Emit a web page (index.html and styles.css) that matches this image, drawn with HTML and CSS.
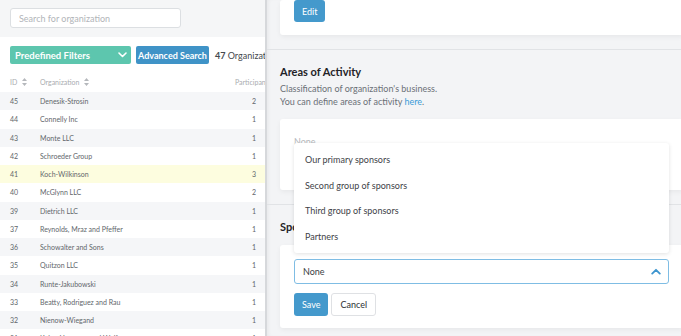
FILE: index.html
```html
<!DOCTYPE html>
<html lang="en">
<head>
  <meta charset="UTF-8" />
  <title>Organizations</title>
  <link rel="stylesheet" href="styles.css">
</head>
<body>
  <div class="layout">
    <aside class="list-panel">
      <div class="search-bar">
        <input type="text" class="search-input" placeholder="Search for organization" />
      </div>
      <div class="filter-bar">
        <button class="btn-filters">Predefined Filters
          <svg width="9" height="6" viewBox="0 0 9 6"><path d="M1 1l3.5 3.5L8 1" fill="none" stroke="#fff" stroke-width="1.6" stroke-linecap="round" stroke-linejoin="round"/></svg>
        </button>
        <button class="btn-advanced">Advanced Search</button>
        <span class="count"><strong>47</strong> Organizations</span>
      </div>
      <table class="org-table">
        <thead>
          <tr>
            <th class="col-id">ID <svg class="sort" width="5" height="8" viewBox="0 0 5 8"><path d="M2.5 0L5 3H0z M2.5 8L0 5h5z" fill="#b5b8bc"/></svg></th>
            <th class="col-org">Organization <svg class="sort" width="5" height="8" viewBox="0 0 5 8"><path d="M2.5 0L5 3H0z M2.5 8L0 5h5z" fill="#b5b8bc"/></svg></th>
            <th class="col-num">Participants</th>
          </tr>
        </thead>
        <tbody>
          <tr><td class="col-id">45</td><td>Denesik-Strosin</td><td class="col-num">2</td></tr>
          <tr><td class="col-id">44</td><td>Connelly Inc</td><td class="col-num">1</td></tr>
          <tr><td class="col-id">43</td><td>Monte LLC</td><td class="col-num">1</td></tr>
          <tr><td class="col-id">42</td><td>Schroeder Group</td><td class="col-num">1</td></tr>
          <tr class="selected"><td class="col-id">41</td><td>Koch-Wilkinson</td><td class="col-num">3</td></tr>
          <tr><td class="col-id">40</td><td>McGlynn LLC</td><td class="col-num">2</td></tr>
          <tr><td class="col-id">39</td><td>Dietrich LLC</td><td class="col-num">1</td></tr>
          <tr><td class="col-id">37</td><td>Reynolds, Mraz and Pfeffer</td><td class="col-num">1</td></tr>
          <tr><td class="col-id">36</td><td>Schowalter and Sons</td><td class="col-num">1</td></tr>
          <tr><td class="col-id">35</td><td>Quitzon LLC</td><td class="col-num">1</td></tr>
          <tr><td class="col-id">34</td><td>Runte-Jakubowski</td><td class="col-num">1</td></tr>
          <tr><td class="col-id">33</td><td>Beatty, Rodriguez and Rau</td><td class="col-num">1</td></tr>
          <tr><td class="col-id">32</td><td>Nienow-Wiegand</td><td class="col-num">1</td></tr>
          <tr><td class="col-id">31</td><td>Kuhn, Hermann and Wolf</td><td class="col-num">1</td></tr>
        </tbody>
      </table>
    </aside>

    <main class="detail-panel">
      <section class="section section-top">
        <div class="card">
          <button class="btn btn-primary">Edit</button>
        </div>
      </section>

      <section class="section">
        <h3>Areas of Activity</h3>
        <p class="hint">Classification of organization's business.<br>You can define areas of activity <a href="#">here</a>.</p>
        <div class="card card-areas">
          <span class="placeholder">None</span>
        </div>
      </section>

      <section class="section">
        <h3>Sponsor Groups</h3>
        <div class="card card-form">
          <div class="select-wrap">
            <div class="select">
              <span>None</span>
              <svg width="10" height="7" viewBox="0 0 10 7"><path d="M1.2 5.6L5 1.8l3.8 3.8" fill="none" stroke="#3d95cf" stroke-width="1.8" stroke-linecap="round" stroke-linejoin="round"/></svg>
            </div>
            <ul class="dropdown">
              <li>Our primary sponsors</li>
              <li>Second group of sponsors</li>
              <li>Third group of sponsors</li>
              <li>Partners</li>
            </ul>
          </div>
          <div class="actions">
            <button class="btn btn-primary">Save</button>
            <button class="btn btn-default">Cancel</button>
          </div>
        </div>
      </section>
    </main>
  </div>
</body>
</html>
```

FILE: styles.css
```css
:root {
  --teal: #5dc6ae;
  --blue: #4499cc;
  --link: #3b9bd8;
  --text: #2b2f33;
  --muted: #6b7076;
  --row-alt: #f5f6f8;
  --panel-bg: #f3f4f6;
  --line: #e1e3e6;
}

* {
  box-sizing: border-box;
  margin: 0;
  padding: 0;
}

body {
  font-family: 'Lato', 'Noto Sans', sans-serif;
  color: var(--text);
  background-color: var(--panel-bg);
  width: 681px;
  height: 336px;
  overflow: hidden;
}

.layout {
  display: flex;
  height: 336px;
}

/* Left list */
.list-panel {
  flex: 0 0 267px;
  background-color: #fff;
  border-right: 2px solid #d6d8db;
  overflow: hidden;
}

.search-bar {
  background-color: #f5f6f7;
  padding: 8px 10px 9px;
}

.search-input {
  display: block;
  width: 171px;
  height: 20px;
  border: 1px solid #dcdfe2;
  border-radius: 3px;
  background: #fff;
  padding: 0 8px;
  font-family: inherit;
  font-size: 9px;
}

.search-input::placeholder {
  color: #b2b5b9;
}

.filter-bar {
  display: flex;
  align-items: center;
  gap: 5px;
  padding: 9px 10px 8px;
  white-space: nowrap;
}

.filter-bar button {
  flex-shrink: 0;
  height: 18px;
  border: none;
  border-radius: 2px;
  color: #fff;
  font-family: inherit;
  font-size: 9.5px;
  font-weight: 700;
}

.btn-filters {
  width: 121px;
  background-color: var(--teal);
  display: flex;
  align-items: center;
  justify-content: space-between;
  padding: 0 4px 0 5px;
}

.btn-advanced {
  width: 73px;
  background-color: #3f93c7;
  padding: 0;
  text-align: center;
  font-size: 9px !important;
}

.count {
  font-size: 9px;
  color: #45494e;
  margin-left: 1px;
}

.org-table {
  width: 100%;
  border-collapse: collapse;
  table-layout: fixed;
  font-size: 7px;
  color: #62666b;
}

.org-table th {
  height: 20px;
  text-align: left;
  font-weight: 400;
  color: #a9acb0;
  font-size: 7px;
  white-space: nowrap;
  overflow: visible;
}

.org-table td {
  height: 18.25px;
  white-space: nowrap;
}

.org-table .col-id {
  width: 40px;
  padding-left: 10px;
}

.org-table .col-num {
  text-align: right;
  padding-right: 9px;
  width: 40px;
}

.org-table th.col-num {
  text-align: left;
  padding: 0 0 0 10px;
}

.sort {
  margin-left: 3px;
  vertical-align: -1px;
}

.org-table tbody tr:nth-child(odd) {
  background-color: var(--row-alt);
}

.org-table tbody tr.selected {
  background-color: #fdfddf;
}

/* Right detail */
.detail-panel {
  flex: 0 0 416px;
  padding-left: 13px;
  box-shadow: inset 3px 0 4px -2px rgba(0, 0, 0, 0.06);
}

.section {
  border-bottom: 1px solid var(--line);
  margin-left: -13px;
  padding: 15px 0 14px 13px;
}

.section-top {
  padding-top: 0;
}

.section h3 {
  font-size: 11px;
  font-weight: 700;
  color: #1f2327;
  line-height: 14px;
  margin-bottom: 3px;
}

.hint {
  font-size: 9px;
  line-height: 13px;
  color: var(--muted);
  margin-bottom: 11px;
}

.hint a {
  color: var(--link);
  text-decoration: none;
}

.card {
  background-color: #fff;
  border-radius: 3px 0 0 3px;
  box-shadow: 0 2px 5px rgba(0, 0, 0, 0.05);
  padding: 0 14px 13px;
}

.card-areas {
  height: 71px;
  padding-top: 10px;
}

.placeholder {
  font-size: 9px;
  color: #b4b7bb;
}

.section h3 + .card {
  margin-top: 11px;
}

.card-form {
  padding-top: 14px;
  padding-bottom: 12px;
}

.btn {
  display: block;
  height: 23px;
  border-radius: 3px;
  font-family: inherit;
  font-size: 9px;
  padding: 0 8px;
}

.section-top .btn {
  height: 22px;
}

.btn-primary {
  background-color: var(--blue);
  border: none;
  color: #fff;
}

.btn-default {
  background-color: #fff;
  border: 1px solid #dfe1e4;
  color: #2b2f33;
}

.select-wrap {
  position: relative;
}

.select {
  height: 25px;
  border: 1px solid #7fbde4;
  border-radius: 3px;
  display: flex;
  align-items: center;
  justify-content: space-between;
  padding: 0 7px 0 8px;
  font-size: 9px;
  color: #3a3e43;
}

.dropdown {
  position: absolute;
  left: 0;
  right: 0;
  bottom: calc(100% + 6px);
  list-style: none;
  background-color: #fff;
  border-radius: 3px;
  box-shadow: 0 1px 4px rgba(0, 0, 0, 0.12);
  padding: 4px 0;
  z-index: 10;
}

.dropdown li {
  height: 25.5px;
  line-height: 25.5px;
  padding-left: 11px;
  font-size: 9px;
  color: #3e4247;
}

.actions {
  display: flex;
  gap: 3px;
  margin-top: 9px;
}
```
